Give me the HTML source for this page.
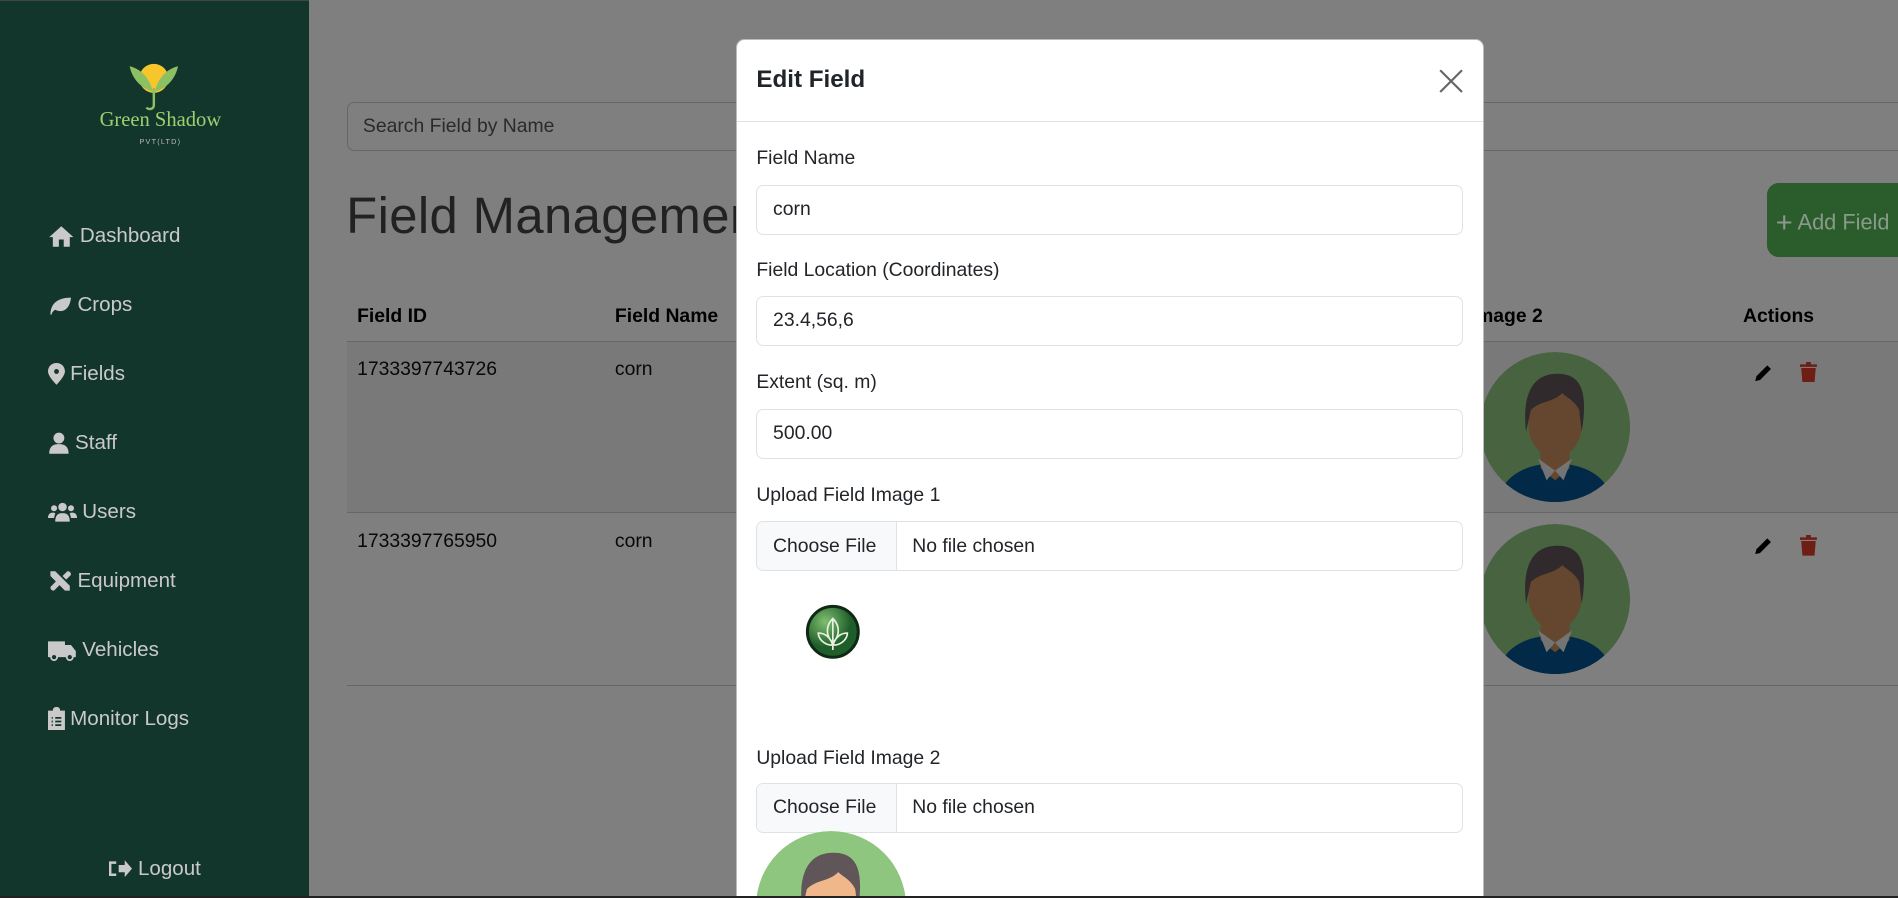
<!DOCTYPE html>
<html><head><meta charset="utf-8"><style>
*{box-sizing:border-box;margin:0;padding:0}
html,body{width:1898px;height:898px;overflow:hidden}
body{zoom:1.21046;width:1568px;height:742px;position:relative;font-family:"Liberation Sans",sans-serif;background:#fff;overflow:hidden}
.side{position:absolute;left:0;top:0;width:255px;height:742px;background:#13362c;border-top:1px solid #444;}
.nav{position:absolute;left:40px;color:#c9c9c9;font-size:17px;display:flex;align-items:center;gap:4px}
.nav svg{fill:#c9c9c9}
.main{position:absolute;left:255px;top:0;right:0;bottom:0;background:#fff}
.search{position:absolute;left:32px;top:84px;width:1290px;height:41px;border:1px solid #ccc;border-radius:6px;padding:10px 12px;color:#555;font-size:16px}
h1{position:absolute;left:31px;top:154px;font-weight:normal;font-size:42px;color:#444;font-family:"Liberation Sans",sans-serif;letter-spacing:0.3px}
.add{position:absolute;left:1205px;top:151px;width:120px;height:61px;background:#55b456;border-radius:10px;color:#e8e8e8;font-size:18px;padding:20px 0 0 8px}
.th{position:absolute;top:252px;font-weight:bold;font-size:16px;color:#000}
.row1{position:absolute;left:32px;top:282px;width:1300px;height:142px;background:#f2f2f2;border-top:1px solid #ccc;border-bottom:1px solid #ccc}
.td{position:absolute;font-size:16px;color:#111}
.ov{position:absolute;left:255px;top:0;right:0;bottom:0;background:rgba(0,0,0,.5)}
.modal{position:absolute;left:608px;top:32px;width:618px;height:708px;background:#fff;border-radius:7px 7px 0 0;border:1px solid #bbb;border-bottom:none;overflow:hidden}
.mh{height:68px;border-bottom:1px solid #dee2e6;padding:22px 16px;font-size:20px;font-weight:bold;color:#212529;position:relative}
.lbl{position:absolute;left:16px;font-size:16px;color:#212529}
.inp{position:absolute;left:16px;width:584px;height:41px;border:1px solid #dee2e6;border-radius:6px;padding:10px 13px;font-size:16px;color:#212529}
.file span{position:absolute;left:0;top:0;bottom:0;width:115px;background:#f8f9fa;border-right:1px solid #dee2e6;padding:10px 13px;border-radius:6px 0 0 6px}
.file b{font-weight:normal;position:absolute;left:128px;top:10px}
</style></head><body>
<div class="side">
 <svg style="position:absolute;left:104px;top:48px" width="46" height="50" viewBox="0 0 46 50">
  <circle cx="23" cy="16" r="12" fill="#f7c62a"/>
  <path d="M3 6 C12 8 20 16 22 27 C12 24 5 16 3 6Z" fill="#8cc063"/>
  <path d="M43 6 C34 8 26 16 24 27 C34 24 41 16 43 6Z" fill="#8cc063"/>
  <path d="M23 24 L23 38 C23 42 18 42 17 40" stroke="#8cc063" stroke-width="2" fill="none"/>
 </svg>
 <div style="position:absolute;left:0;width:265px;text-align:center;top:89px;color:#9bd070;font-family:'Liberation Serif',serif;font-size:17px">Green Shadow</div>
 <div style="position:absolute;left:0;width:265px;text-align:center;top:112px;color:#bbb;font-size:6px;letter-spacing:1px">PVT(LTD)</div>
 <div class="nav" style="top:184px"><svg width="22" height="18" viewBox="0 0 22 18"><path d="M11 1 L21 10 L18 10 L18 18 L13 18 L13 12 L9 12 L9 18 L4 18 L4 10 L1 10Z"/></svg>Dashboard</div>
 <div class="nav" style="top:241px"><svg width="20" height="18" viewBox="0 0 20 18"><path d="M2 17 C2 8 8 3 19 3 C18 13 12 16 6 13 C4 14 3 16 3 17Z"/></svg>Crops</div>
 <div class="nav" style="top:298px"><svg width="14" height="18" viewBox="0 0 14 18"><path d="M7 0 C11 0 14 3 14 7 C14 11 7 18 7 18 C7 18 0 11 0 7 C0 3 3 0 7 0Z M7 5 A2 2 0 1 0 7.1 5Z"/></svg>Fields</div>
 <div class="nav" style="top:355px"><svg width="18" height="18" viewBox="0 0 18 18"><circle cx="9" cy="5" r="4.5"/><path d="M1 18 C1 12 4 10 9 10 C14 10 17 12 17 18Z"/></svg>Staff</div>
 <div class="nav" style="top:412px"><svg width="24" height="18" viewBox="0 0 24 18"><circle cx="12" cy="5" r="3.5"/><circle cx="5" cy="6" r="2.5"/><circle cx="19" cy="6" r="2.5"/><path d="M6 17 C6 11 9 10 12 10 C15 10 18 11 18 17Z M0 14 C0 10 3 9 6 10 L5 14Z M24 14 C24 10 21 9 18 10 L19 14Z"/></svg>Users</div>
 <div class="nav" style="top:469px"><svg width="20" height="18" viewBox="0 0 20 18"><path d="M2 1 L6 1 L18 13 L18 17 L14 17 L2 5Z M12 5 L16 1 C18 1 19 2 19 4 L15 8Z M2 14 L7 9 L10 12 L5 17 C3 17 2 16 2 14Z"/></svg>Equipment</div>
 <div class="nav" style="top:526px"><svg width="24" height="18" viewBox="0 0 24 18"><path d="M0 2 L14 2 L14 5 L19 5 L23 10 L23 15 L0 15Z"/><circle cx="5" cy="15" r="2.5" fill="#13362c" stroke="#c9c9c9" stroke-width="1.5"/><circle cx="18" cy="15" r="2.5" fill="#13362c" stroke="#c9c9c9" stroke-width="1.5"/></svg>Vehicles</div>
 <div class="nav" style="top:583px"><svg width="14" height="19" viewBox="0 0 14 19"><path d="M0 3 L4 3 C4 1 5 0 7 0 C9 0 10 1 10 3 L14 3 L14 19 L0 19Z"/><path d="M3 9 h1 M6 9 h5 M3 12 h1 M6 12 h5 M3 15 h1 M6 15 h5" stroke="#13362c" stroke-width="1.5"/></svg>Monitor Logs</div>
 <div class="nav" style="top:707px;left:90px"><svg width="20" height="16" viewBox="0 0 20 16"><path d="M0 2 L6 2 L6 4 L2 4 L2 12 L6 12 L6 14 L0 14Z M8 5 L13 5 L13 1 L19 8 L13 15 L13 11 L8 11Z"/></svg>Logout</div>
</div>
<div class="main">
 <div class="search">Search Field by Name</div>
 <h1>Field Management</h1>
 <div class="add" style="background:#55b858"><span style="font-size:24px;vertical-align:-2px">+</span> Add Field</div>
 <div class="th" style="left:40px">Field ID</div>
 <div class="th" style="left:253px">Field Name</div>
 <div class="th" style="left:960px">Image 2</div>
 <div class="th" style="left:1185px">Actions</div>
 <div class="row1"></div>
 <div style="position:absolute;left:32px;top:566px;width:1300px;border-top:1px solid #ccc"></div>
 <div class="td" style="left:40px;top:296px">1733397743726</div>
 <div class="td" style="left:253px;top:296px">corn</div>
 <div class="td" style="left:40px;top:438px">1733397765950</div>
 <div class="td" style="left:253px;top:438px">corn</div>
 <svg style="position:absolute;left:968px;top:291px" width="124" height="124" viewBox="0 0 124 124"><defs><clipPath id="c"><circle cx="62" cy="62" r="62"/></clipPath></defs><g clip-path="url(#c)"><circle cx="62" cy="62" r="62" fill="#8fc67f"/><path d="M20 110 C30 95 50 92 62 92 C74 92 94 95 104 110 L104 130 L20 130Z" fill="#045591"/><path d="M50 82 L74 82 L74 96 L62 106 L50 96Z" fill="#c98e5c"/><path d="M48 88 L62 98 L55 106Z M76 88 L62 98 L69 106Z" fill="#e8e8e8"/><ellipse cx="62" cy="60" rx="22" ry="27" fill="#c98e5c"/><path d="M38 66 C34 28 48 18 64 18 C82 18 90 30 84 66 L82 48 C78 40 72 38 68 34 C60 42 50 40 42 48Z" fill="#605558"/></g></svg>
 <svg style="position:absolute;left:968px;top:433px" width="124" height="124" viewBox="0 0 124 124"><g clip-path="url(#c)"><circle cx="62" cy="62" r="62" fill="#8fc67f"/><path d="M20 110 C30 95 50 92 62 92 C74 92 94 95 104 110 L104 130 L20 130Z" fill="#045591"/><path d="M50 82 L74 82 L74 96 L62 106 L50 96Z" fill="#c98e5c"/><path d="M48 88 L62 98 L55 106Z M76 88 L62 98 L69 106Z" fill="#e8e8e8"/><ellipse cx="62" cy="60" rx="22" ry="27" fill="#c98e5c"/><path d="M38 66 C34 28 48 18 64 18 C82 18 90 30 84 66 L82 48 C78 40 72 38 68 34 C60 42 50 40 42 48Z" fill="#605558"/></g></svg>
 <svg style="position:absolute;left:1194px;top:300px" width="16" height="16" viewBox="0 0 16 16"><path d="M1 15 L2 11 L11 2 L14 5 L5 14Z" fill="#000"/></svg>
 <svg style="position:absolute;left:1232px;top:299px" width="14" height="17" viewBox="0 0 14 17"><path d="M0 2 L5 2 L5 0 L9 0 L9 2 L14 2 L14 4 L0 4Z M1 5 L13 5 L12 17 L2 17Z" fill="#dc3d2a"/></svg>
 <svg style="position:absolute;left:1194px;top:443px" width="16" height="16" viewBox="0 0 16 16"><path d="M1 15 L2 11 L11 2 L14 5 L5 14Z" fill="#000"/></svg>
 <svg style="position:absolute;left:1232px;top:442px" width="14" height="17" viewBox="0 0 14 17"><path d="M0 2 L5 2 L5 0 L9 0 L9 2 L14 2 L14 4 L0 4Z M1 5 L13 5 L12 17 L2 17Z" fill="#dc3d2a"/></svg>
</div>
<div class="ov" style="background:rgba(0,0,0,.5)"></div>
<div style="position:absolute;left:1460px;top:151px;width:108px;height:61px;background:#2b5c2c;border-radius:10px 0 0 10px;color:#8a9a8a;font-size:18px;padding:20px 0 0 7px;white-space:nowrap;overflow:hidden"><span style="font-size:24px;vertical-align:-2px">+</span> Add Field</div>
<div class="modal">
 <div class="mh">Edit Field<svg style="position:absolute;right:16px;top:24px" width="20" height="20" viewBox="0 0 20 20"><path d="M1 1 L19 19 M19 1 L1 19" stroke="#666" stroke-width="1.8"/></svg></div>
 <div class="lbl" style="top:89px">Field Name</div>
 <div class="inp" style="top:120px">corn</div>
 <div class="lbl" style="top:181px">Field Location (Coordinates)</div>
 <div class="inp" style="top:212px">23.4,56,6</div>
 <div class="lbl" style="top:274px">Extent (sq. m)</div>
 <div class="inp" style="top:305px">500.00</div>
 <div class="lbl" style="top:367px">Upload Field Image 1</div>
 <div class="inp file" style="top:398px"><span>Choose File</span><b>No file chosen</b></div>
 <svg style="position:absolute;left:56px;top:466px" width="46" height="46" viewBox="0 0 46 46"><defs><radialGradient id="g" cx=".35" cy=".3"><stop offset="0" stop-color="#7fbf70"/><stop offset="1" stop-color="#1f5e2a"/></radialGradient></defs><circle cx="23" cy="23" r="21" fill="url(#g)" stroke="#0e2a14" stroke-width="2.5"/><path d="M23 38 L23 12 M23 12 C17 18 17 26 23 32 C29 26 29 18 23 12Z M23 34 C15 34 11 28 11 24 C17 24 21 28 23 34Z M23 34 C31 34 35 28 35 24 C29 24 25 28 23 34Z" stroke="#e8f0e0" stroke-width="1.4" fill="none"/></svg>
 <div class="lbl" style="top:584px">Upload Field Image 2</div>
 <div class="inp file" style="top:614px"><span>Choose File</span><b>No file chosen</b></div>
 <svg style="position:absolute;left:16px;top:654px" width="124" height="124" viewBox="0 0 124 124"><g clip-path="url(#c)"><circle cx="62" cy="62" r="62" fill="#8fc67f"/><ellipse cx="62" cy="60" rx="22" ry="27" fill="#f0b88a"/><path d="M38 66 C34 28 48 18 64 18 C82 18 90 30 84 66 L82 48 C78 40 72 38 68 34 C60 42 50 40 42 48Z" fill="#605558"/></g></svg>
</div>
<div style="position:absolute;left:0;right:0;top:740px;height:2px;background:#222"></div>
</body></html>
